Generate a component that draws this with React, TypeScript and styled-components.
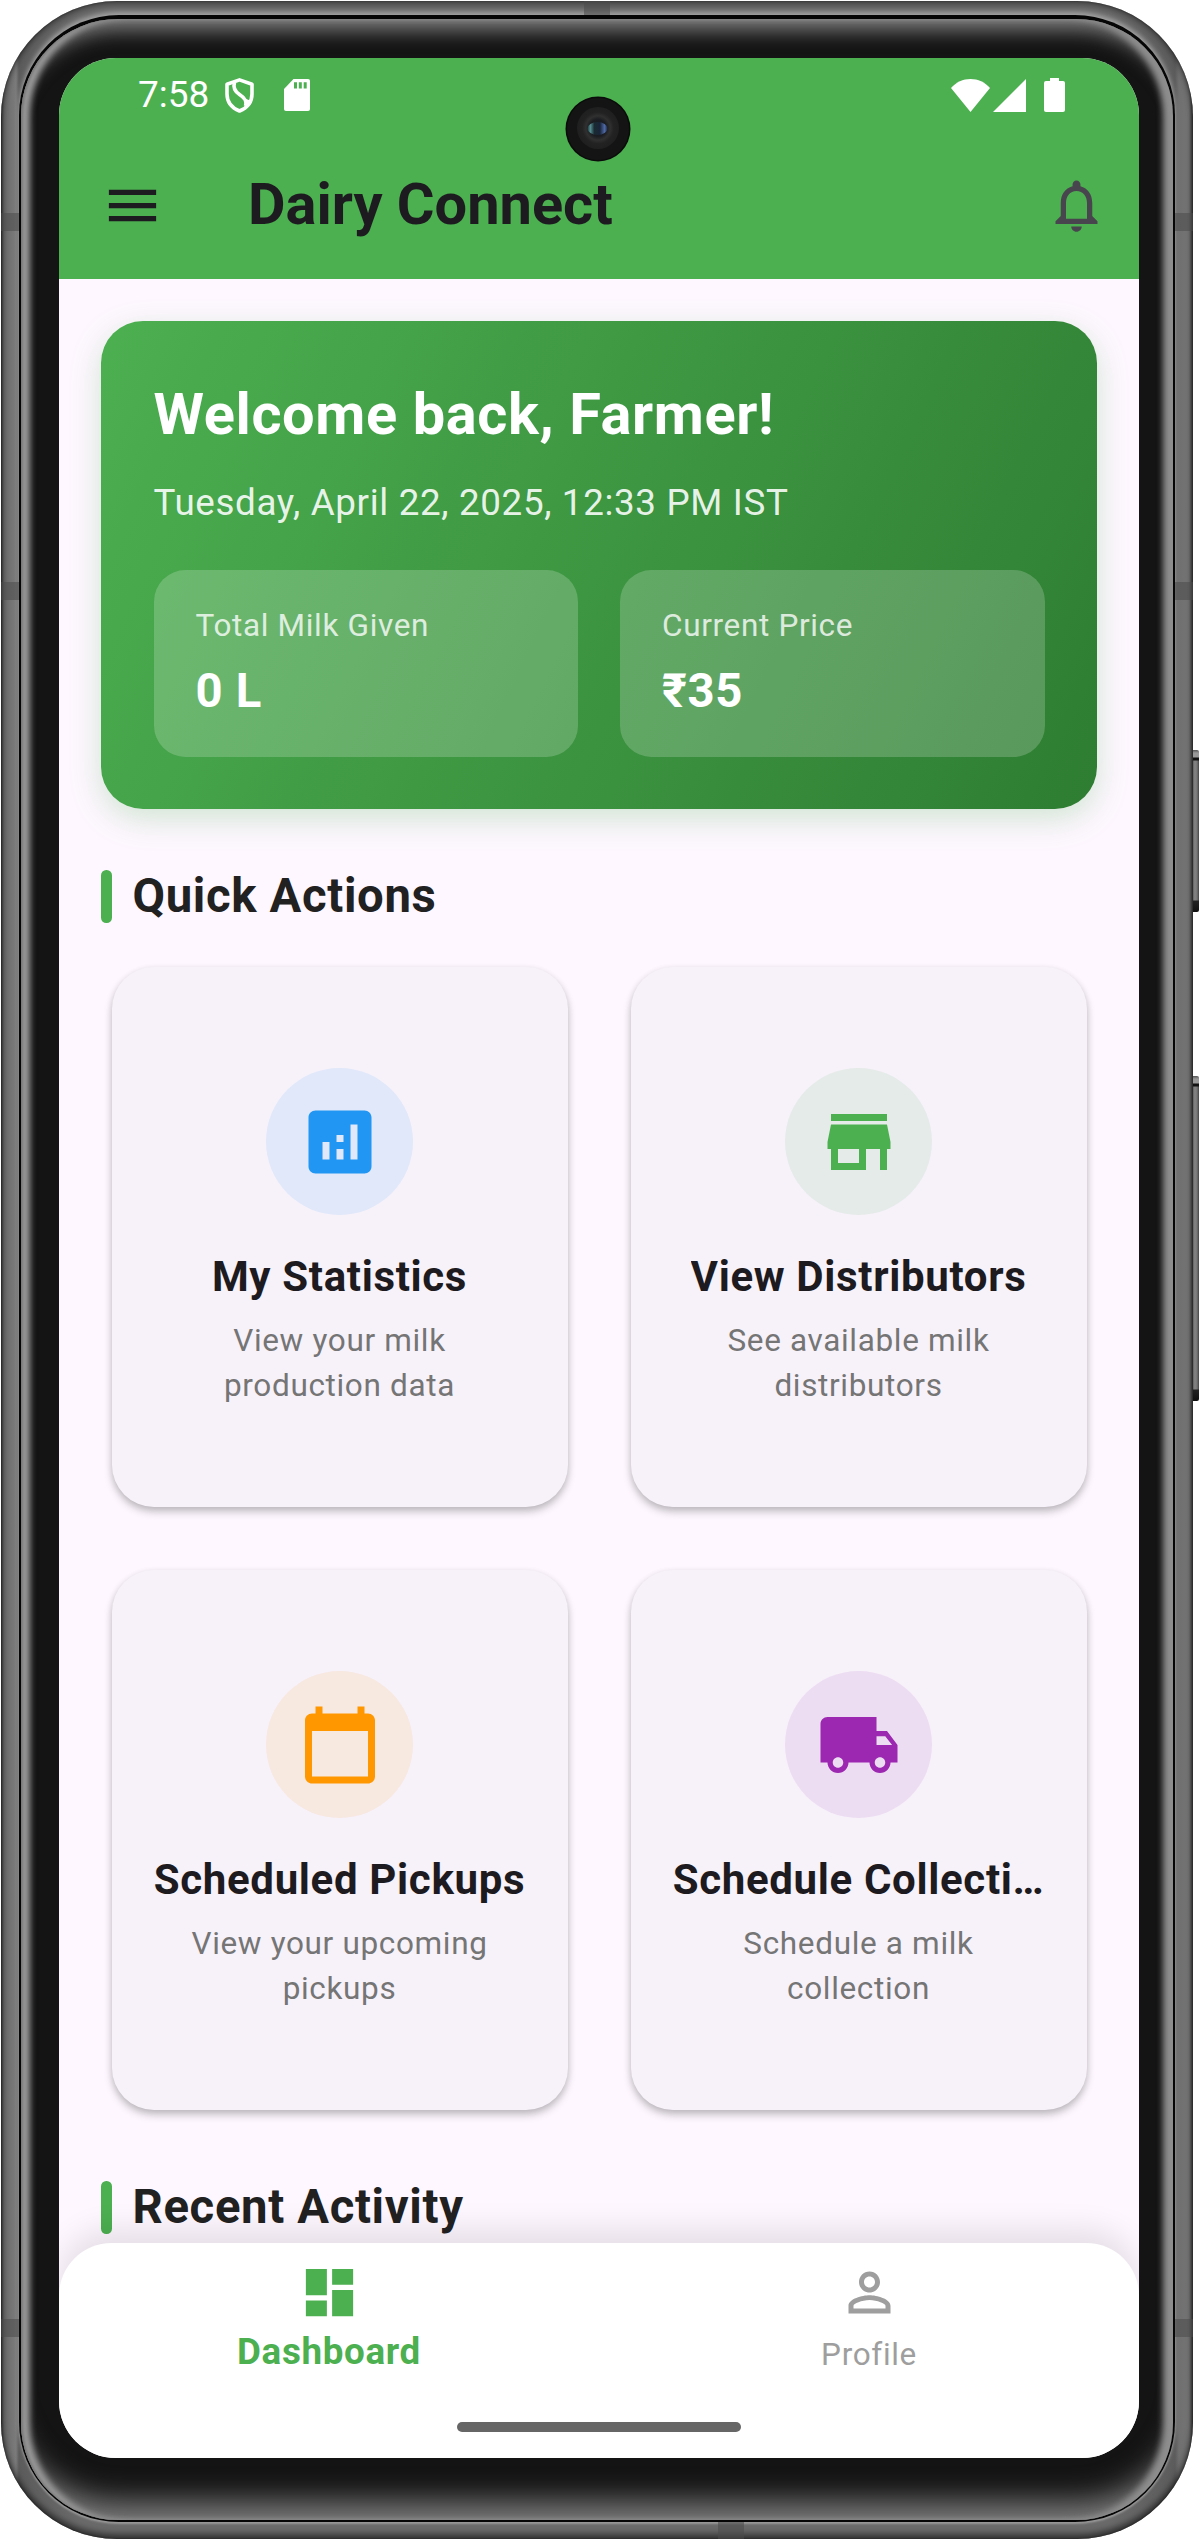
import React from "react";
import styled, { createGlobalStyle } from "styled-components";

const GlobalStyle = createGlobalStyle`
  html, body { margin: 0; padding: 0; background: #fff; }
  * { box-sizing: border-box; }
  body {
    font-family: Roboto, "Noto Sans", "Liberation Sans", sans-serif;
    -webkit-font-smoothing: antialiased;
  }
`;

const GREEN = "#4caf50";

/* ---------- device ---------- */

const Stage = styled.div`
  position: relative;
  width: 1200px;
  height: 2541px;
  padding: 1px 7px 2px 1px;
  overflow: hidden;
  background: #fff;
`;

const Chassis = styled.div`
  position: relative;
  width: 1192px;
  height: 2538px;
  padding: 14px 18px 17px;
  border-radius: 116px;
  background: linear-gradient(
    90deg,
    #4a4a4a 0,
    #6a6a6a 3px,
    #7b7b7b 15px,
    #5c5c5c 18px,
    #6a6a6a 80px,
    #6a6a6a 1110px,
    #5c5c5c 1174px,
    #707070 1178px,
    #747474 1188px,
    #4c4c4c 1192px
  );
  box-shadow:
    inset 0 3px 6px rgba(0, 0, 0, 0.4),
    inset 0 -5px 6px rgba(0, 0, 0, 0.5),
    inset 0 0 2px rgba(0, 0, 0, 0.5);
`;

const Rim = styled.div`
  height: 100%;
  padding: 4px 2px 2px;
  border-radius: 100px;
  background: #060606;
  box-shadow:
    0 -3px 5px #a4a4a4,
    0 2px 2px #979797;
`;

const Bezel = styled.div`
  height: 100%;
  padding: 39px 34px 61px 38px;
  border-radius: 97px;
  background: #141414;
  box-shadow:
    inset 3px 0 3px -1px #777,
    inset 10px 0 6px -1px #9c9c9c,
    inset -11px 0 6px -1px #8e8e8e,
    inset 0 -36px 30px -18px #7e7e7e,
    inset 0 26px 20px -15px #7e7e7e;
`;

const AntennaBand = styled.span<{ $x: number; $y: number; $w: number; $h: number }>`
  position: absolute;
  left: ${(p) => p.$x}px;
  top: ${(p) => p.$y}px;
  width: ${(p) => p.$w}px;
  height: ${(p) => p.$h}px;
  background: rgba(74, 74, 74, 0.55);
`;

const SideKey = styled.span<{ $top: number; $height: number }>`
  position: absolute;
  left: 1192px;
  top: ${(p) => p.$top}px;
  width: 7px;
  height: ${(p) => p.$height}px;
  border-radius: 0 2px 2px 0;
  background:
    linear-gradient(180deg, #555 0, #999 3px, #999 7px, #111 8px, #111 10px, transparent 11px),
    linear-gradient(0deg, #111 0, #222 11px, transparent 12px),
    linear-gradient(90deg, #4c4c4c 0, #858585 40%, #777 70%, #444 100%);
`;

/* ---------- screen ---------- */

const Screen = styled.div`
  position: relative;
  display: flex;
  flex-direction: column;
  width: 1080px;
  height: 2400px;
  overflow: hidden;
  border-radius: 57px;
  background: #fef7ff;
`;

const Camera = styled.svg`
  position: absolute;
  left: 506px;
  top: 38px;
  width: 66px;
  height: 66px;
`;

const StatusBar = styled.div`
  display: flex;
  flex: none;
  align-items: center;
  justify-content: space-between;
  height: 74px;
  padding: 0 74.5px 0 79px;
  background: ${GREEN};
  color: #fff;
`;

const StatusGroup = styled.div<{ $gap: number }>`
  display: flex;
  align-items: center;
  gap: ${(p) => p.$gap}px;
`;

const Clock = styled.span`
  width: 71px;
  margin-right: -14px;
  font-size: 37px;
  line-height: 44px;
  white-space: nowrap;
`;

const BatterySlot = styled.span`
  display: flex;
  margin-left: 15px;
`;

const AppBar = styled.header`
  display: flex;
  flex: none;
  align-items: center;
  height: 147px;
  padding: 0 31.5px 0 42px;
  background: ${GREEN};
`;

const AppTitle = styled.h1`
  flex: 1;
  margin: 0 0 2px 84px;
  color: #1d1b20;
  font-size: 57.75px;
  font-weight: 700;
  line-height: 73px;
`;

const IconSvg = styled.svg<{ $size: number; $color: string }>`
  display: block;
  flex: none;
  width: ${(p) => p.$size}px;
  height: ${(p) => p.$size}px;
  fill: ${(p) => p.$color};
`;

const Body = styled.main`
  flex: 1;
  min-height: 0;
  margin-bottom: -60px;
  padding: 42px 42px 0;
  overflow: hidden;
`;

/* ---------- welcome card ---------- */

const WelcomeCard = styled.section`
  height: 488px;
  padding: 52px 52.5px;
  border-radius: 42px;
  background: linear-gradient(116.1deg, #4caf50 0%, #2e7d32 100%);
  box-shadow: 0 10px 31px rgba(76, 175, 80, 0.25);
`;

const Greeting = styled.h2`
  margin: 0;
  color: #fff;
  font-size: 57.75px;
  font-weight: 700;
  letter-spacing: 0.6px;
  line-height: 82px;
`;

const Timestamp = styled.p`
  margin: 22px 0 41px;
  color: rgba(255, 255, 255, 0.9);
  font-size: 36.75px;
  letter-spacing: 0.66px;
  line-height: 52px;
`;

const StatRow = styled.div`
  display: grid;
  grid-template-columns: 1fr 1fr;
  gap: 42px;
`;

const StatBox = styled.div`
  height: 187px;
  padding: 33px 42px 0;
  border-radius: 31.5px;
  background: rgba(255, 255, 255, 0.2);
`;

const StatLabel = styled.div`
  color: rgba(255, 255, 255, 0.8);
  font-size: 31.5px;
  letter-spacing: 0.66px;
  line-height: 45px;
`;

const StatValue = styled.div`
  margin-top: 10px;
  color: #fff;
  font-size: 47.25px;
  font-weight: 700;
  letter-spacing: 0.66px;
  line-height: 67px;
`;

/* ---------- sections ---------- */

const SectionHeader = styled.div`
  display: flex;
  align-items: center;
  gap: 21px;
  height: 67.5px;
  margin: 53.5px 0 26px;
`;

const SectionBar = styled.span`
  width: 10.5px;
  height: 52.5px;
  border-radius: 5.25px;
  background: ${GREEN};
`;

const SectionTitle = styled.h2`
  margin: 0;
  color: #212121;
  font-size: 47.25px;
  font-weight: 700;
  letter-spacing: 0.66px;
  line-height: 67.5px;
`;

const ActionGrid = styled.div`
  display: grid;
  grid-template-columns: 1fr 1fr;
  grid-auto-rows: 561.2px;
  gap: 42px;
`;

const ActionCard = styled.article`
  display: flex;
  flex-direction: column;
  align-items: center;
  min-width: 0;
  margin: 10.5px;
  padding: 101.5px 42px 0;
  border-radius: 42px;
  background: #f7f2fa;
  box-shadow:
    0 5px 8px rgba(0, 0, 0, 0.2),
    0 2px 6px rgba(0, 0, 0, 0.1);
`;

const IconDisc = styled.div<{ $tint: string }>`
  display: flex;
  flex: none;
  align-items: center;
  justify-content: center;
  width: 147px;
  height: 147px;
  border-radius: 50%;
  background: ${(p) => p.$tint};
`;

const ActionTitle = styled.h3`
  max-width: 100%;
  margin: 31.5px 0 11px;
  overflow: hidden;
  color: #1d1b20;
  font-size: 42px;
  font-weight: 700;
  letter-spacing: 0.66px;
  line-height: 60px;
  white-space: nowrap;
`;

const ActionText = styled.p`
  margin: 0;
  color: #757575;
  font-size: 31.5px;
  letter-spacing: 0.66px;
  line-height: 45px;
  text-align: center;
`;

/* ---------- bottom navigation ---------- */

const BottomNav = styled.nav`
  position: relative;
  flex: none;
  height: 215px;
  border-radius: 52.5px 52.5px 0 0;
  background: #fff;
  box-shadow: 0 -13px 31px rgba(0, 0, 0, 0.1);
`;

const NavItems = styled.div`
  display: grid;
  grid-template-columns: 1fr 1fr;
  height: 179px;
  padding-top: 18px;
`;

const NavItem = styled.div`
  display: flex;
  flex-direction: column;
  align-items: center;
`;

const NavLabel = styled.span<{ $active?: boolean }>`
  margin-top: ${(p) => (p.$active ? 3 : 6)}px;
  color: ${(p) => (p.$active ? GREEN : "#9e9e9e")};
  font-size: ${(p) => (p.$active ? 36.75 : 31.5)}px;
  font-weight: ${(p) => (p.$active ? 700 : 400)};
  letter-spacing: 0.66px;
  line-height: 50px;
`;

const HomePill = styled.div`
  width: 284px;
  height: 10px;
  margin: 0 auto;
  border-radius: 5px;
  background: #666;
`;

/* ---------- icons ---------- */

const PATHS = {
  menu: "M3 18h18v-2H3v2zm0-5h18v-2H3v2zm0-7v2h18V6H3z",
  bell: "M12 22c1.1 0 2-.9 2-2h-4c0 1.1.9 2 2 2zm6-6v-5c0-3.07-1.63-5.64-4.5-6.32V4c0-.83-.67-1.5-1.5-1.5s-1.5.67-1.5 1.5v.68C7.64 5.36 6 7.92 6 11v5l-2 2v1h16v-1l-2-2zm-2 1H8v-6c0-2.48 1.51-4.5 4-4.5s4 2.02 4 4.5v6z",
  analytics:
    "M19 3H5c-1.1 0-2 .9-2 2v14c0 1.1.9 2 2 2h14c1.1 0 2-.9 2-2V5c0-1.1-.9-2-2-2zM9 17H7v-5h2v5zm4 0h-2v-3h2v3zm0-5h-2v-2h2v2zm4 5h-2V7h2v10z",
  store: "M20 4H4v2h16V4zm1 10v-2l-1-5H4l-1 5v2h1v6h10v-6h4v6h2v-6h1zm-9 4H6v-4h6v4z",
  calendar:
    "M20 3h-1V1h-2v2H7V1H5v2H4c-1.1 0-2 .9-2 2v16c0 1.1.9 2 2 2h16c1.1 0 2-.9 2-2V5c0-1.1-.9-2-2-2zm0 18H4V8h16v13z",
  truck:
    "M20 8h-3V4H3c-1.1 0-2 .9-2 2v11h2c0 1.66 1.34 3 3 3s3-1.34 3-3h6c0 1.66 1.34 3 3 3s3-1.34 3-3h2v-5l-3-4zM6 18.5c-.83 0-1.5-.67-1.5-1.5s.67-1.5 1.5-1.5 1.5.67 1.5 1.5-.67 1.5-1.5 1.5zm13.5-9l1.96 2.5H17V9.5h2.5zm-1.5 9c-.83 0-1.5-.67-1.5-1.5s.67-1.5 1.5-1.5 1.5.67 1.5 1.5-.67 1.5-1.5 1.5z",
  dashboard: "M3 13h8V3H3v10zm0 8h8v-6H3v6zm10 0h8V11h-8v10zm0-18v6h8V3h-8z",
  person:
    "M12 5.9c1.16 0 2.1.94 2.1 2.1s-.94 2.1-2.1 2.1S9.9 9.16 9.9 8s.94-2.1 2.1-2.1m0 9c2.97 0 6.1 1.46 6.1 2.1v1.1H5.9V17c0-.64 3.13-2.1 6.1-2.1M12 4C9.79 4 8 5.79 8 8s1.79 4 4 4 4-1.79 4-4-1.79-4-4-4zm0 9c-2.67 0-8 1.34-8 4v3h16v-3c0-2.66-5.33-4-8-4z",
};

type IconName = keyof typeof PATHS;

function Icon({ name, size = 63, color }: { name: IconName; size?: number; color: string }) {
  return (
    <IconSvg viewBox="0 0 24 24" $size={size} $color={color} aria-hidden="true">
      <path d={PATHS[name]} />
    </IconSvg>
  );
}

const ShieldIcon = () => (
  <svg width="29" height="35" viewBox="0 0 29 35" fill="none" stroke="#fff" strokeWidth="3.6" strokeLinejoin="round">
    <path d="M14.5 1.9 27 6.2V16c0 8-5 14-12.5 17C7 30 2 24 2 16V6.2Z" />
    <path d="M9.5 4.2C7.8 10 10 13.5 14.5 16.5C20 20 22 23 20.5 28" />
    <path d="M22.5 21.5 21 26" strokeWidth="4" />
  </svg>
);

const SdCardIcon = () => (
  <svg width="26" height="32" viewBox="0 0 26 32">
    <path fill="#fff" d="M9.5 0H24a2 2 0 0 1 2 2v28a2 2 0 0 1-2 2H2a2 2 0 0 1-2-2V10Z" />
    <path fill={GREEN} d="M10 3.2h3v6.2h-3zM14.8 3.2h3v6.2h-3zM19.7 3.2h3v6.2h-3z" />
  </svg>
);

const WifiIcon = () => (
  <svg width="39" height="33" viewBox="0 0 39 33" fill="#fff">
    <path d="M19.5 33 0 9C5 3.2 12 0 19.5 0S34 3.2 39 9Z" />
  </svg>
);

const SignalIcon = () => (
  <svg width="33" height="33" viewBox="0 0 33 33" fill="#fff">
    <path d="M33 0v33H0Z" />
  </svg>
);

const BatteryIcon = () => (
  <svg width="21" height="34" viewBox="0 0 21 34" fill="#fff">
    <path d="M6 0h9v3h4a2 2 0 0 1 2 2v27a2 2 0 0 1-2 2H2a2 2 0 0 1-2-2V5a2 2 0 0 1 2-2h4Z" />
  </svg>
);

function CameraLens() {
  return (
    <Camera viewBox="0 0 66 66" aria-hidden="true">
      <defs>
        <radialGradient id="lens-glass">
          <stop offset="0" stopColor="#16202c" />
          <stop offset="0.4" stopColor="#1a1c20" />
          <stop offset="0.58" stopColor="#303030" />
          <stop offset="0.75" stopColor="#222" />
          <stop offset="1" stopColor="#1f1f1f" />
        </radialGradient>
        <linearGradient id="lens-glint">
          <stop offset="0" stopColor="#22393d" />
          <stop offset="0.14" stopColor="#5fa3a6" />
          <stop offset="0.34" stopColor="#1a2c34" />
          <stop offset="0.62" stopColor="#19253a" />
          <stop offset="0.86" stopColor="#5878c0" />
          <stop offset="1" stopColor="#1f2a44" />
        </linearGradient>
      </defs>
      <circle cx="33" cy="33" r="32.5" fill="#0b0b0b" />
      <circle cx="33" cy="33" r="31" fill="#141414" />
      <circle cx="33" cy="32" r="21" fill="url(#lens-glass)" />
      <ellipse cx="32.5" cy="32.5" rx="10" ry="6.5" fill="url(#lens-glint)" opacity="0.85" />
    </Camera>
  );
}

/* ---------- content ---------- */

interface Action {
  icon: IconName;
  color: string;
  tint: string;
  title: string;
  lines: [string, string];
}

const actions: Action[] = [
  {
    icon: "analytics",
    color: "#2196f3",
    tint: "rgba(33, 150, 243, 0.1)",
    title: "My Statistics",
    lines: ["View your milk", "production data"],
  },
  {
    icon: "store",
    color: "#4caf50",
    tint: "rgba(76, 175, 80, 0.1)",
    title: "View Distributors",
    lines: ["See available milk", "distributors"],
  },
  {
    icon: "calendar",
    color: "#ff9800",
    tint: "rgba(255, 152, 0, 0.1)",
    title: "Scheduled Pickups",
    lines: ["View your upcoming", "pickups"],
  },
  {
    icon: "truck",
    color: "#9c27b0",
    tint: "rgba(156, 39, 176, 0.1)",
    title: "Schedule Collecti…",
    lines: ["Schedule a milk", "collection"],
  },
];

const bands = [
  { x: 583, y: 0, w: 26, h: 14 },
  { x: 717, y: 2521, w: 26, h: 17 },
  { x: 0, y: 212, w: 18, h: 18 },
  { x: 1174, y: 212, w: 18, h: 18 },
  { x: 0, y: 581, w: 18, h: 18 },
  { x: 1174, y: 581, w: 18, h: 18 },
  { x: 0, y: 2318, w: 18, h: 18 },
  { x: 1174, y: 2318, w: 18, h: 18 },
];

export default function App() {
  return (
    <Stage>
      <GlobalStyle />
      <SideKey $top={750} $height={162} />
      <SideKey $top={1076} $height={325} />
      <Chassis>
        {bands.map((b) => (
          <AntennaBand key={`${b.x}-${b.y}`} $x={b.x} $y={b.y} $w={b.w} $h={b.h} />
        ))}
        <Rim>
          <Bezel>
            <Screen>
              <StatusBar>
                <StatusGroup $gap={30}>
                  <Clock>7:58</Clock>
                  <ShieldIcon />
                  <SdCardIcon />
                </StatusGroup>
                <StatusGroup $gap={3}>
                  <WifiIcon />
                  <SignalIcon />
                  <BatterySlot>
                    <BatteryIcon />
                  </BatterySlot>
                </StatusGroup>
              </StatusBar>
              <AppBar>
                <Icon name="menu" color="#1d1b20" />
                <AppTitle>Dairy Connect</AppTitle>
                <Icon name="bell" color="#49454f" />
              </AppBar>
              <CameraLens />

              <Body>
                <WelcomeCard>
                  <Greeting>Welcome back, Farmer!</Greeting>
                  <Timestamp>Tuesday, April 22, 2025, 12:33 PM IST</Timestamp>
                  <StatRow>
                    <StatBox>
                      <StatLabel>Total Milk Given</StatLabel>
                      <StatValue>0 L</StatValue>
                    </StatBox>
                    <StatBox>
                      <StatLabel>Current Price</StatLabel>
                      <StatValue>₹35</StatValue>
                    </StatBox>
                  </StatRow>
                </WelcomeCard>

                <SectionHeader>
                  <SectionBar />
                  <SectionTitle>Quick Actions</SectionTitle>
                </SectionHeader>
                <ActionGrid>
                  {actions.map((a) => (
                    <ActionCard key={a.title}>
                      <IconDisc $tint={a.tint}>
                        <Icon name={a.icon} size={84} color={a.color} />
                      </IconDisc>
                      <ActionTitle>{a.title}</ActionTitle>
                      <ActionText>
                        {a.lines[0]}
                        <br />
                        {a.lines[1]}
                      </ActionText>
                    </ActionCard>
                  ))}
                </ActionGrid>

                <SectionHeader>
                  <SectionBar />
                  <SectionTitle>Recent Activity</SectionTitle>
                </SectionHeader>
              </Body>

              <BottomNav>
                <NavItems>
                  <NavItem>
                    <Icon name="dashboard" color={GREEN} />
                    <NavLabel $active>Dashboard</NavLabel>
                  </NavItem>
                  <NavItem>
                    <Icon name="person" color="#9e9e9e" />
                    <NavLabel>Profile</NavLabel>
                  </NavItem>
                </NavItems>
                <HomePill />
              </BottomNav>
            </Screen>
          </Bezel>
        </Rim>
      </Chassis>
    </Stage>
  );
}
